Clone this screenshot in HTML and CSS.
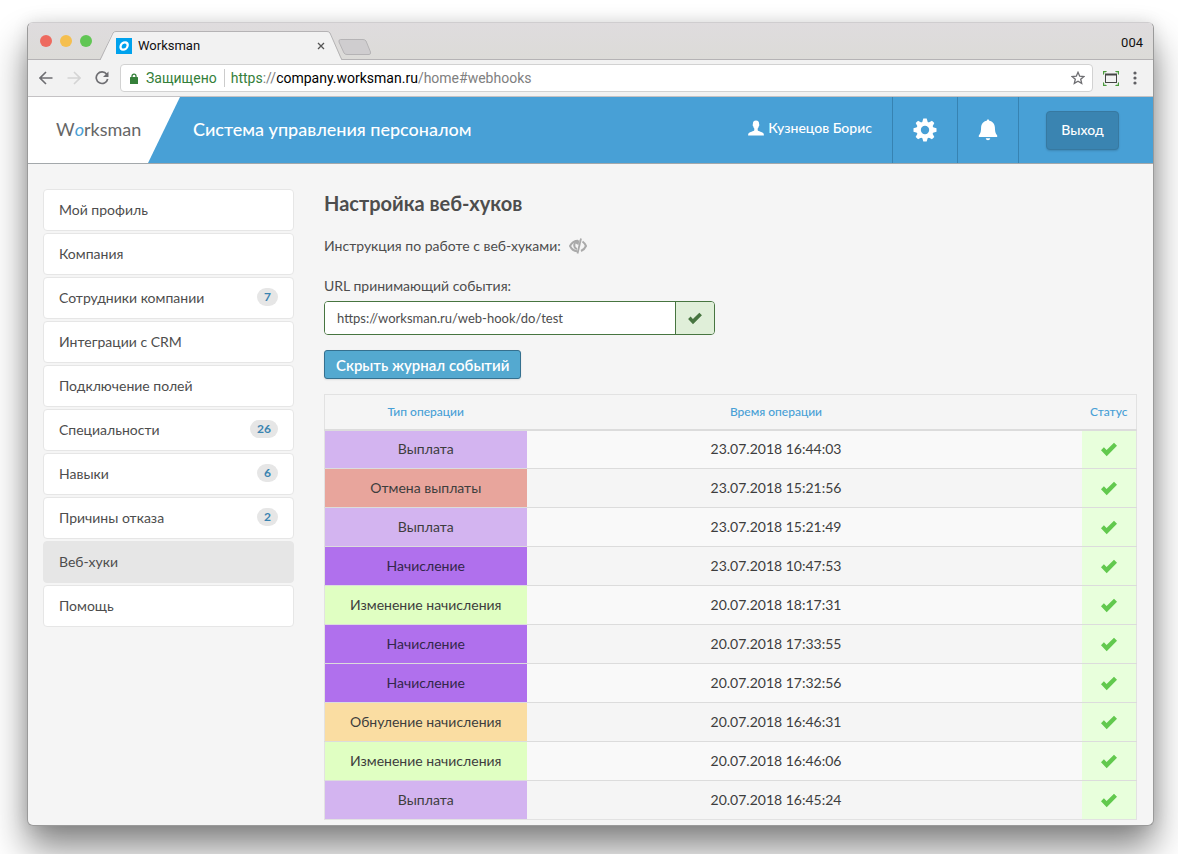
FILE: index.html
```html
<!DOCTYPE html>
<html lang="ru">
<head>
<meta charset="utf-8">
<title>Worksman</title>
<link rel="stylesheet" href="styles.css">
</head>
<body>
<svg class="defs" aria-hidden="true">
  <symbol id="check" viewBox="0 0 18 15"><path d="M1 8.2 3.9 5.3 6.6 8 14 .8 17 3.8 6.7 14.2Z"/></symbol>
</svg>
<div class="window">
  <div class="tabstrip">
    <div class="lights"><span class="light red"></span><span class="light yellow"></span><span class="light green"></span></div>
    <div class="tab">
      <svg class="tab-shape" viewBox="0 0 242 30" preserveAspectRatio="none" aria-hidden="true"><path d="M0 29.5 C1 29 1 28 2 26 L11 4 Q13 .5 15 .5 H227 Q229 .5 231 4 L240 26 Q241 29 242 29.5 V30 H0Z" fill="#f2f2f2"/><path d="M0 28.5 L1 27 L13 2 Q14 .5 16 .5 H227 Q229 .5 230 2 L241 27 L242 28.5" fill="none" stroke="#b5b3b5"/></svg>
      <svg class="favicon" viewBox="0 0 16 16" aria-hidden="true"><rect width="16" height="16" fill="#00a2ed"/><ellipse cx="8.1" cy="8" rx="3.5" ry="3.7" transform="skewX(-12) translate(1.7 0)" fill="none" stroke="#fff" stroke-width="2.3"/></svg>
      <span class="tab-title">Worksman</span>
      <button class="plain" aria-label="Закрыть"><svg width="8" height="8" viewBox="0 0 8 8"><path d="M1 1 7 7M7 1 1 7" stroke="#555" stroke-width="1.3"/></svg></button>
    </div>
    <button class="plain newtab" aria-label="Новая вкладка"><svg width="34" height="16" viewBox="0 0 34 16"><path d="M2.5.5H25Q27 .5 28 2L32.5 13Q33 15.5 31 15.5H9Q7 15.5 6 14L1 3Q.5 .5 2.500 .5Z" fill="#cfcdcf" stroke="#b5b3b5"/></svg></button>
    <span class="profile">004</span>
  </div>
  <div class="toolbar">
    <button class="plain" aria-label="Назад"><svg width="14" height="14" viewBox="0 0 14 14"><path d="M13.500 7H1.500M7 1 1 7l6 6" fill="none" stroke="#6e6e72" stroke-width="1.600"/></svg></button>
    <button class="plain" aria-label="Вперёд"><svg width="14" height="14" viewBox="0 0 14 14"><path d="M.5 7h12M7 1l6 6-6 6" fill="none" stroke="#d4d4d4" stroke-width="1.600"/></svg></button>
    <button class="plain" aria-label="Обновить"><svg width="14" height="16" viewBox="0 0 14 16"><path d="M11.700 4.200A5.800 5.800 0 1 0 12.700 9" fill="none" stroke="#6e6e72" stroke-width="1.700"/><path d="M13.500 1.500V7H8Z" fill="#6e6e72"/></svg></button>
    <div class="address">
      <svg width="8" height="11" viewBox="0 0 8 11" aria-hidden="true"><path d="M2 5V3.200a2 2 0 0 1 4 0V5" fill="none" stroke="#35803a" stroke-width="1.300"/><rect y="4" width="8" height="7" rx=".5" fill="#35803a"/></svg>
      <span class="secure">Защищено</span>
      <span class="url"><span class="scheme">https</span>://<span class="host">company.worksman.ru</span>/home#webhooks</span>
      <button class="plain star" aria-label="В закладки"><svg width="14" height="14" viewBox="0 0 14 14"><path d="M7 1.300 8.700 5.200 12.900 5.500 9.700 8.200 10.700 12.400 7 10.200 3.300 12.400 4.300 8.200 1.100 5.500 5.300 5.200Z" fill="none" stroke="#6e6e72" stroke-width="1.300"/></svg></button>
    </div>
    <button class="plain" aria-label="Снимок"><svg width="16" height="15" viewBox="0 0 16 15"><path d="M0 4V0H4L3 1.200H1.200V3ZM16 4V0H12L13 1.200H14.800V3ZM0 11V15H4L3 13.800H1.200V12ZM16 11V15H12L13 13.800H14.800V12Z" fill="#4a9a3c"/><rect x="2.500" y="3.500" width="11" height="8" fill="none" stroke="#444"/><path d="M2 3.500H14" stroke="#444" stroke-width="2"/></svg></button>
    <button class="plain" aria-label="Меню"><svg width="4" height="14" viewBox="0 0 4 14" fill="#5f5f63"><circle cx="2" cy="2" r="1.600"/><circle cx="2" cy="7" r="1.600"/><circle cx="2" cy="12" r="1.600"/></svg></button>
  </div>

  <header class="header">
    <a class="brand" href="#">W<span class="brand-o">o</span>rksman</a>
    <span class="slogan">Система управления персоналом</span>
    <a class="user" href="#"><svg width="16" height="16" viewBox="0 0 16 16" fill="#fff" aria-hidden="true"><path d="M8 .5C5.700.5 4.700 2.200 4.900 4.300 4.500 4.500 4.600 6 5.200 6.300 5.400 7.500 6 8.200 6.300 8.600V10.200C5.800 11.300 1.500 12 .6 13.200.2 13.800.1 14.800.1 15.500H15.900C15.900 14.800 15.800 13.800 15.400 13.200 14.500 12 10.200 11.300 9.700 10.200V8.600C10 8.200 10.600 7.500 10.800 6.300 11.400 6 11.500 4.500 11.100 4.300 11.300 2.200 10.300.5 8 .5Z"/></svg>Кузнецов Борис</a>
    <button class="plain cell gear" aria-label="Настройки"><svg width="24" height="24" viewBox="0 0 24 24"><g fill="#fff"><circle cx="12" cy="12" r="8.600"/><g id="teeth"><path d="M10.300.5H13.700L14.700 4V20L13.700 23.500H10.300L9.300 20V4Z"/><path d="M.5 10.300V13.700L4 14.700H20L23.500 13.700V10.300L20 9.300H4Z"/></g><use href="#teeth" transform="rotate(45 12 12)"/></g><circle cx="12" cy="12" r="4.200" fill="#48a0d6"/></svg></button>
    <button class="plain cell bell" aria-label="Уведомления"><svg width="20" height="22" viewBox="0 0 20 22" fill="#fff"><path d="M10 .5C9.200.5 8.800 1 8.800 1.700 5.300 2.200 3.300 5 3.100 8.300 3 12 2.800 14.200.8 16.500V18H19.200V16.500C17.200 14.200 17 12 16.900 8.300 16.700 5 14.700 2.200 11.200 1.700 11.200 1 10.800.5 10 .5ZM7.700 19.300H12.300Q12 21.300 10 21.300T7.700 19.300Z"/></svg></button>
    <div class="exit cell"><button class="logout">Выход</button></div>
  </header>

  <div class="content">
    <nav class="menu">
      <a href="#">Мой профиль</a>
      <a href="#">Компания</a>
      <a href="#">Сотрудники компании<span class="badge">7</span></a>
      <a href="#">Интеграции с CRM</a>
      <a href="#">Подключение полей</a>
      <a href="#">Специальности<span class="badge">26</span></a>
      <a href="#">Навыки<span class="badge">6</span></a>
      <a href="#">Причины отказа<span class="badge">2</span></a>
      <a href="#" class="active">Веб-хуки</a>
      <a href="#">Помощь</a>
    </nav>
    <main class="main">
      <h1>Настройка веб-хуков</h1>
      <p class="guide">Инструкция по работе с веб-хуками:
        <button class="plain" aria-label="Показать инструкцию"><svg width="18" height="16" viewBox="0 0 18 16"><g fill="none" stroke="#aaa"><path d="M8 13.300C5 13 2.500 11 1 8 2.500 5 5.500 2.700 9 2.700" stroke-width="2"/><path d="M6 4.500C4.500 7.500 5.500 10.500 8 11" stroke-width="2"/><path d="M12 .5 8.500 15.500" stroke-width="1.800"/><path d="M13.500 3.500C15 4.500 16.300 6.300 17 8 16 10.300 14.300 12 12 13" stroke-width="2"/></g><path d="M5 4 10.500 2 9.500 7 7.500 6Z" fill="#aaa"/></svg></button></p>
      <label class="label" for="url">URL принимающий события:</label>
      <div class="field">
        <input id="url" type="text" value="https://worksman.ru/web-hook/do/test">
        <span class="addon"><svg width="16" height="13"><use href="#check"/></svg></span>
      </div>
      <button class="toggle">Скрыть журнал событий</button>
      <table class="log">
        <colgroup><col class="col-type"><col><col class="col-status"></colgroup>
        <thead><tr><th>Тип операции</th><th class="time">Время операции</th><th>Статус</th></tr></thead>
        <tbody>
          <tr><td class="pay">Выплата</td><td class="time">23.07.2018 16:44:03</td><td class="ok"><svg><use href="#check"/></svg></td></tr>
          <tr><td class="cancel">Отмена выплаты</td><td class="time">23.07.2018 15:21:56</td><td class="ok"><svg><use href="#check"/></svg></td></tr>
          <tr><td class="pay">Выплата</td><td class="time">23.07.2018 15:21:49</td><td class="ok"><svg><use href="#check"/></svg></td></tr>
          <tr><td class="accrual">Начисление</td><td class="time">23.07.2018 10:47:53</td><td class="ok"><svg><use href="#check"/></svg></td></tr>
          <tr><td class="change">Изменение начисления</td><td class="time">20.07.2018 18:17:31</td><td class="ok"><svg><use href="#check"/></svg></td></tr>
          <tr><td class="accrual">Начисление</td><td class="time">20.07.2018 17:33:55</td><td class="ok"><svg><use href="#check"/></svg></td></tr>
          <tr><td class="accrual">Начисление</td><td class="time">20.07.2018 17:32:56</td><td class="ok"><svg><use href="#check"/></svg></td></tr>
          <tr><td class="reset">Обнуление начисления</td><td class="time">20.07.2018 16:46:31</td><td class="ok"><svg><use href="#check"/></svg></td></tr>
          <tr><td class="change">Изменение начисления</td><td class="time">20.07.2018 16:46:06</td><td class="ok"><svg><use href="#check"/></svg></td></tr>
          <tr><td class="pay">Выплата</td><td class="time">20.07.2018 16:45:24</td><td class="ok"><svg><use href="#check"/></svg></td></tr>
        </tbody>
      </table>
    </main>
  </div>
</div>
</body>
</html>
```
FILE: styles.css
```css
* { box-sizing: border-box; }
body {
  margin: 0;
  padding: 22px 24px 28px 27px;
  background: #fff;
  color: #4d4d4d;
  font: 14px/20px "Futura PT", Lato, "Open Sans", sans-serif;
}
html { overflow: hidden; }
.defs { position: absolute; width: 0; height: 0; }
a { color: inherit; text-decoration: none; }
svg { display: block; flex: none; }
.plain { border: 0; padding: 0; background: none; }
.window {
  border: 1px solid #9a9a9a;
  border-top-color: #cfcdcf;
  border-radius: 6px;
  background: #f5f5f5;
  box-shadow: 0 22px 36px rgba(0, 0, 0, .48), 0 0 16px rgba(0, 0, 0, .1);
  overflow: hidden;
}

/* Browser chrome */
.tabstrip {
  display: flex;
  align-items: center;
  height: 37px;
  padding: 0 10px 0 12px;
  background: linear-gradient(#dfdcde, #dcdbd8);
  border-bottom: 1px solid #b5b3b5;
  color: #111;
  font: 13px/20px Roboto, sans-serif;
}
.lights { display: flex; gap: 8px; width: 60px; }
.light { width: 12px; height: 12px; border-radius: 50%; }
.red { background: #ee6a5f; }
.yellow { background: #f5bf4f; }
.green { background: #61c654; }
.tab {
  position: relative;
  display: flex;
  align-items: center;
  gap: 6px;
  width: 242px;
  height: 29px;
  margin-top: 8px;
  padding: 2px 17px 0 16px;
}
.tab-shape { position: absolute; inset: 0; width: 100%; height: 30px; }
.favicon { position: relative; width: 16px; height: 16px; }
.tab-title { position: relative; flex: 1; }
.tab .plain { position: relative; }
.newtab { margin: 12px 0 0 -4px; }
.profile { margin-left: auto; padding-top: 4px; }
.toolbar {
  display: flex;
  align-items: center;
  gap: 14px;
  height: 37px;
  padding: 0 16px 0 11px;
  background: #f2f2f2;
  border-bottom: 1px solid #c4c2c4;
}
.address {
  display: flex;
  flex: 1;
  align-items: center;
  height: 28px;
  margin: 0 -4px 0 -3px;
  padding: 0 7px 0 9px;
  background: #fff;
  border: 1px solid #d2d2d2;
  border-radius: 4px;
  font: 14px/18px Roboto, sans-serif;
}
.secure { margin-left: 8px; padding-right: 7px; border-right: 1px solid #ccc; color: #35803a; }
.url { padding-left: 6px; color: #808080; }
.scheme { color: #35803a; }
.host { color: #000; }
.star { margin-left: auto; }

/* Site header */
.header {
  display: flex;
  align-items: stretch;
  height: 67px;
  background: #48a0d6;
  border-bottom: 1px solid #a3a8ab;
  color: #fff;
}
.brand {
  display: flex;
  align-items: center;
  width: 152px;
  padding: 0 0 2px 28px;
  background: #fff;
  clip-path: polygon(0 0, 100% 0, 120px 100%, 0 100%);
  color: #666;
  font-size: 18px;
}
.brand-o { color: #48a0d6; font-style: italic; }
.slogan { align-self: center; margin: 0 auto 0 13px; padding-bottom: 2px; font-size: 18px; font-weight: 500; }
.user { display: flex; align-items: center; gap: 4px; padding: 0 20px 4px 0; font-weight: 500; }
.cell { display: flex; align-items: center; justify-content: center; border-left: 1px solid #3783b2; }
.gear { width: 65px; }
.bell { width: 61px; }
.exit { width: 135px; padding-right: 7px; }
.logout {
  height: 39px;
  padding: 0 14px;
  border: 1px solid #3779a1;
  border-radius: 4px;
  background: #3a84b1;
  color: #fff;
  font: inherit;
  font-weight: 500;
  box-shadow: 0 1px 2px rgba(0, 0, 0, .15);
}

/* Page body */
.content { display: flex; gap: 30px; padding: 25px 16px 5px 15px; }
.menu { display: flex; flex: 0 0 251px; flex-direction: column; gap: 2px; }
.menu a {
  display: flex;
  align-items: center;
  justify-content: space-between;
  height: 42px;
  padding: 0 15px;
  background: #fff;
  border: 1px solid #e6e6e6;
  border-radius: 4px;
}
.menu .active { background: #e6e6e6; }
.badge {
  min-width: 21px;
  margin-bottom: 2px;
  padding: 0 7px;
  border-radius: 9px;
  background: #e6e6e6;
  color: #3a84b1;
  font-size: 12px;
  font-weight: 700;
  line-height: 18px;
}
.main { flex: 1; min-width: 0; }
h1 { margin: 0 0 19px; font-size: 20px; font-weight: 700; line-height: 28px; }
.guide { display: flex; align-items: center; gap: 8px; margin: 0 0 20px; }
.label { display: block; margin-bottom: 5px; }
.field {
  display: flex;
  width: 391px;
  height: 34px;
  margin-bottom: 15px;
  border: 1px solid #477540;
  border-radius: 4px;
  overflow: hidden;
}
.field input { flex: 1; min-width: 0; border: 0; padding: 0 12px; background: #fff; color: #4d4d4d; font: inherit; font-size: 13px; }
.addon {
  display: flex;
  align-items: center;
  justify-content: center;
  width: 39px;
  border-left: 1px solid #477540;
  background: #e0efd9;
  fill: #477540;
}
.toggle {
  display: block;
  height: 29px;
  margin-bottom: 15px;
  padding: 0 11px;
  border: 1px solid #35708f;
  border-radius: 3px;
  background: #54a9d0;
  color: #fff;
  font: inherit;
  font-size: 15px;
  font-weight: 600;
  box-shadow: 0 1px 2px rgba(0, 0, 0, .1);
}
.log { width: 100%; table-layout: fixed; border-collapse: collapse; border: 1px solid #e2e2e2; text-align: center; }
.col-type { width: 202px; }
.col-status { width: 55px; }
.log th { height: 35px; padding: 0; border-bottom: 2px solid #dcdcdc; color: #48a0d6; font-size: 12px; font-weight: 500; }
.log td { height: 39px; padding: 0; border-top: 1px solid #dcdcdc; color: #3d3d3d; }
.log .time { padding-right: 56px; }
.log tbody tr:nth-child(odd) { background: #f9f9f9; }
.log svg { width: 18px; height: 15px; margin: 0 auto; fill: #62c94e; }
.log .pay { background: #d3b4f0; }
.log .cancel { background: #e8a59c; }
.log .accrual { background: #b070ed; color: #33264a; }
.log .change { background: #e0ffc2; }
.log .reset { background: #fadda2; }
.log .ok { background: #e8ffdc; }
```
